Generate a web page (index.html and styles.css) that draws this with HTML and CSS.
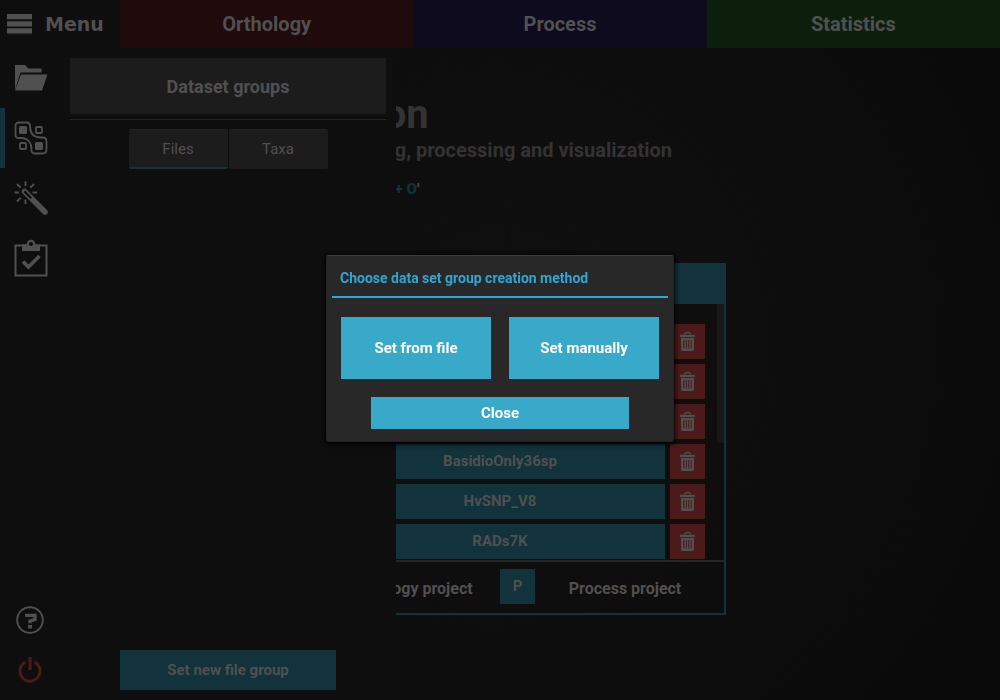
FILE: index.html
```html
<!DOCTYPE html>
<html lang="en">
<head>
<meta charset="utf-8">
<title>TriFusion</title>
<meta name="viewport" content="width=device-width, initial-scale=1">
<link rel="stylesheet" href="styles.css">
</head>
<body>
<svg class="defs" aria-hidden="true">
  <symbol id="trash" viewBox="0 0 15 19">
    <path d="M5 2.800V1.500a.8.8 0 0 1 .8-.8h3.400a.8.800 0 0 1 .8.800v1.300" fill="none" stroke="currentColor" stroke-width="1.300"/>
    <path d="M0 2.800h15V5H0z" fill="currentColor"/>
    <path fill-rule="evenodd" d="M1 6h13v11.500a1.500 1.500 0 0 1-1.500 1.500h-10A1.500 1.500 0 0 1 1 17.500zM3.300 8v8.500h1V8zM5.800 8v8.500h1V8zM8.200 8v8.500h1V8zM10.700 8v8.500h1V8z" fill="currentColor"/>
  </symbol>
</svg>
<header class="topbar">
  <button class="menu" type="button">
    <svg width="26" height="20" viewBox="0 0 26 20" fill="currentColor"><path d="M0 0h25v5.300H0zM0 7.200h25v5.300H0zM0 14.300h25v5.300H0z"/></svg>
    <span>Menu</span>
  </button>
  <button class="tab orthology" type="button">Orthology</button>
  <button class="tab process" type="button">Process</button>
  <button class="tab statistics" type="button">Statistics</button>
</header>

<div class="workspace">
  <main class="home">
    <div class="hero">
      <h1>TriFusion</h1>
      <p class="tagline">gathering, processing and visualization</p>
      <p class="hint">Open files with '<b>Ctrl + O</b>'</p>
    </div>
    <section class="projects">
      <div class="projects-head"></div>
      <div class="projects-body">
        <ul>
          <li><button class="name" type="button" aria-label="Project 1"></button><button class="remove" type="button" aria-label="Remove"><svg><use href="#trash"/></svg></button></li>
          <li><button class="name" type="button" aria-label="Project 2"></button><button class="remove" type="button" aria-label="Remove"><svg><use href="#trash"/></svg></button></li>
          <li><button class="name" type="button" aria-label="Project 3"></button><button class="remove" type="button" aria-label="Remove"><svg><use href="#trash"/></svg></button></li>
          <li><button class="name" type="button">BasidioOnly36sp</button><button class="remove" type="button" aria-label="Remove"><svg><use href="#trash"/></svg></button></li>
          <li><button class="name" type="button">HvSNP_V8</button><button class="remove" type="button" aria-label="Remove"><svg><use href="#trash"/></svg></button></li>
          <li><button class="name" type="button">RADs7K</button><button class="remove" type="button" aria-label="Remove"><svg><use href="#trash"/></svg></button></li>
        </ul>
        <div class="scrollbar"></div>
      </div>
      <div class="legend">
        <span class="key">O</span><span class="key-label">Orthology project</span>
        <span class="key">P</span><span class="key-label">Process project</span>
      </div>
    </section>
  </main>

  <aside class="drawer">
    <nav class="rail">
      <button type="button" aria-label="Open files">
        <svg width="34" height="28" viewBox="0 0 34 28" fill="currentColor"><path d="M1 26V1h10l3.500 3.500H27.500V8.500H6.500z"/><path d="M7 10.500h26.500L28 26.500H1z"/></svg>
      </button>
      <button class="active" type="button" aria-label="Dataset groups">
        <svg width="34" height="34" viewBox="0 0 34 34" fill="none" stroke="currentColor" stroke-width="1.800"><path d="M5 1.500h7.500q3.500 0 3.500 3.500c0 7.500 4 11.500 11 11.500h1.500q4 0 4 4v8q0 4-4 4h-7.500q-3.500 0-3.500-3.500c0-7.500-4-12-10.500-12H5Q1.500 17.500 1.500 13.500V5q0-3.500 3.500-3.500z"/><rect x="5" y="5" width="8" height="8" rx="1.500" fill="currentColor" stroke="none"/><rect x="21" y="21" width="8" height="8" rx="1.500" fill="currentColor" stroke="none"/><rect x="22" y="6" width="6" height="6" rx="1"/><rect x="6" y="22" width="6" height="6" rx="1"/></svg>
      </button>
      <button type="button" aria-label="Tools">
        <svg width="34" height="34" viewBox="0 0 34 34" fill="none" stroke="currentColor" stroke-width="1.900"><path d="M11.500.5V5M11.500 18.500V23M.5 11.500H5M18.500 11.500H23M3 3l3.700 3.700M20 3l-3.700 3.700M3 20.500l3.700-3.700"/><path d="M10.500 10.500L31 31" stroke-width="5.600" stroke-linecap="round"/><path d="M11 11l5.500 5.500" stroke="#0e0e0e" stroke-width="2.400" stroke-linecap="round"/></svg>
      </button>
      <button type="button" aria-label="Tasks">
        <svg width="34" height="38" viewBox="0 0 34 38" fill="none" stroke="currentColor"><path d="M1.500 6.500h31v30h-31z" stroke-width="2"/><path d="M8 5.500h5.500a3.500 3.500 0 0 1 7 0H26V12H8z" fill="currentColor" stroke="none"/><circle cx="17" cy="5" r="3.200" fill="#0e0e0e" stroke-width="2.200"/><path d="M9 22.500l5.500 5.500L25.500 17" stroke-width="3.600"/></svg>
      </button>
      <span class="spacer"></span>
      <button class="low" type="button" aria-label="Help">
        <svg width="30" height="30" viewBox="0 0 30 30" fill="none" stroke="currentColor"><circle cx="15" cy="15" r="12.800" stroke-width="1.900"/><path d="M10 10.300h10v4.200l-5 1.500v2.300" stroke-width="3.300"/><path d="M13 20h4v3.500h-4z" fill="currentColor" stroke="none"/></svg>
      </button>
      <button class="low power" type="button" aria-label="Quit">
        <svg width="30" height="30" viewBox="0 0 30 30" fill="none" stroke="currentColor" stroke-width="3"><path d="M10.500 7.200a10 10 0 1 0 9 0M15 2v13"/></svg>
      </button>
    </nav>
    <div class="groups">
      <h2>Dataset groups</h2>
      <div class="switch">
        <button class="on" type="button">Files</button>
        <button type="button">Taxa</button>
      </div>
      <button class="new-group" type="button">Set new file group</button>
    </div>
  </aside>
</div>

<div class="overlay">
  <div class="dialog" role="dialog" aria-labelledby="dialog-title">
    <h3 id="dialog-title">Choose data set group creation method</h3>
    <div class="choices">
      <button type="button">Set from file</button>
      <button type="button">Set manually</button>
    </div>
    <button class="close" type="button">Close</button>
  </div>
</div>
</body>
</html>
```
FILE: styles.css
```css
* { box-sizing: border-box; margin: 0; padding: 0; }

body {
  display: flex;
  flex-direction: column;
  height: 100vh;
  overflow: hidden;
  background: #0e0e0e;
  color: #505050;
  font: bold 15px/20px Roboto, sans-serif;
}

button { border: 0; background: none; color: inherit; font: inherit; cursor: pointer; }
svg { display: block; }
ul { list-style: none; }
.defs { position: absolute; width: 0; height: 0; }

.topbar { display: flex; height: 48px; flex: none; }
.menu {
  display: flex;
  align-items: center;
  gap: 12px;
  width: 120px;
  padding: 0 0 1px 7px;
  font: bold 19px/24px "DejaVu Sans", sans-serif;
}
.tab { flex: 1; font-size: 20px; }
.orthology { background: #1f0b0c; }
.process { background: #0d0b1d; }
.statistics { background: #0b1f0c; }

.workspace { position: relative; flex: 1; }

.home {
  height: 100%;
  background: radial-gradient(circle at 50% 45%, #0f0f0f, #0e0e0e 40%, #090909);
}
.hero { padding: 43px 0 0 260px; color: #333; }
.hero h1 { font-size: 40px; line-height: 48px; }
.tagline { padding-left: 60px; font-size: 20px; line-height: 22px; }
.hint { padding-top: 18px; color: #505050; }
.hint b { color: #12323c; }

.projects {
  width: 452px;
  margin: 64px auto 0;
  border: 2px solid #12323c;
  border-top: 0;
}
.projects-head { height: 41px; background: #12323c; }
.projects-body { display: flex; justify-content: space-between; border-bottom: 2px solid #262626; }
.projects ul { display: grid; gap: 5px; flex: 1; padding: 20px 12px 1px 59px; }
.projects li { display: flex; gap: 5px; }
.name { flex: 1; height: 35px; padding-bottom: 2px; background: #12323c; }
.remove {
  display: grid;
  place-items: center;
  width: 35px;
  height: 35px;
  background: #4c1a1a;
}
.remove svg { width: 15px; height: 19px; }
.scrollbar { width: 7px; height: 139px; background: #171717; }
.legend { display: flex; align-items: center; gap: 3px; height: 51px; padding: 0 12px 2px 9px; }
.key { width: 35px; line-height: 35px; background: #12323c; text-align: center; }
.key-label { flex: 1; padding-top: 4px; font-size: 16px; text-align: center; }

.drawer {
  position: absolute;
  top: 0;
  bottom: 0;
  left: 0;
  display: flex;
  width: 396px;
  background: #0e0e0e;
}
.rail { display: flex; flex-direction: column; width: 60px; }
.rail button { display: grid; place-items: center; height: 60px; padding-right: 4px; border-left: 5px solid transparent; }
.rail .active { border-color: #12323c; }
.rail .low { height: 50px; padding: 0; border: 0; }
.rail .power { margin-bottom: 5px; color: #4c1a1a; }
.spacer { flex: 1; }
.groups { display: flex; flex: 1; flex-direction: column; align-items: center; padding: 10px; }
.groups h2 {
  align-self: stretch;
  height: 56px;
  background: #1c1c1c;
  font-size: 18px;
  line-height: 58px;
  text-align: center;
}
.switch {
  display: flex;
  justify-content: center;
  align-self: stretch;
  gap: 1px;
  margin-top: 5px;
  padding-top: 9px;
  border-top: 1px solid #262626;
}
.switch button {
  width: 99px;
  height: 40px;
  border-top: 1px solid #222;
  border-bottom: 2px solid #1c1c1c;
  border-radius: 2px;
  background: #1c1c1c;
  font-weight: normal;
}
.switch .on { border-bottom-color: #12323c; }
.new-group { width: 216px; height: 40px; margin-top: auto; background: #12323c; }

.overlay { position: fixed; inset: 0; display: grid; place-items: center; padding-bottom: 3px; }
.dialog {
  display: grid;
  width: 348px;
  padding: 6px 5px 12px;
  border: 1px solid #222;
  border-top-color: #3c3c3c;
  border-radius: 3px;
  background: #282828;
  box-shadow: 0 1px 5px 1px #000;
}
.dialog h3 {
  padding: 6px 8px 8px;
  border-bottom: 2px solid #2fa7d4;
  color: #2fa7d4;
  font-size: 14px;
}
.dialog button { background: #39a9c9; color: #fff; }
.choices { display: flex; gap: 18px; padding: 19px 9px 18px; }
.choices button { flex: 1; height: 62px; }
.close { height: 32px; margin: 0 39px; }
```
